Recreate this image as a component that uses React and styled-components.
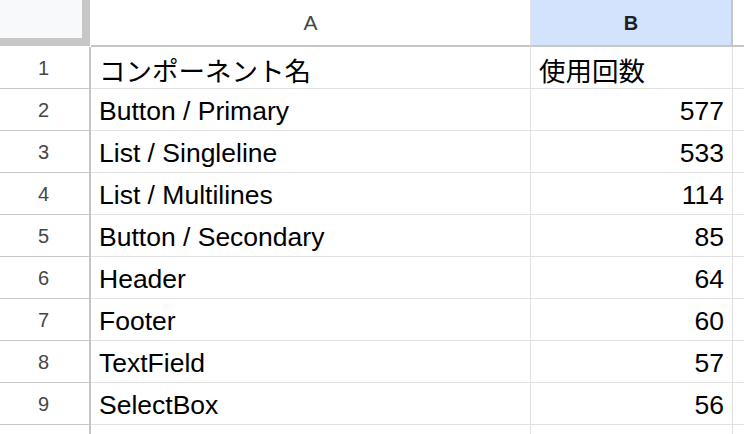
import React from 'react';
import styled, { createGlobalStyle } from 'styled-components'

const rows = [
    { name: 'コンポーネント名', count: '使用回数', head: true },
    { name: 'Button / Primary', count: 577 },
    { name: 'List / Singleline', count: 533 },
    { name: 'List / Multilines', count: 114 },
    { name: 'Button / Secondary', count: 85 },
    { name: 'Header', count: 64 },
    { name: 'Footer', count: 60 },
    { name: 'TextField', count: 57 },
    { name: 'SelectBox', count: 56 },
]

const App = () => {
    return (
        <>
            <Global />
            <Sheet>
                <Corner />
                <ColHeader>A</ColHeader>
                <ColHeader selected>B</ColHeader>
                <ColHeader />
                {rows.map((row, i) => (
                    <React.Fragment key={i}>
                        <RowHeader>{i + 1}</RowHeader>
                        <Cell>{row.name}</Cell>
                        <Cell align={row.head ? 'left' : 'right'}>{row.count}</Cell>
                        <Cell />
                    </React.Fragment>
                ))}
                {/* next row, only its top edge is in view */}
                <RowHeader />
                <Cell />
                <Cell />
                <Cell />
            </Sheet>
        </>
    );
}

export default App

const Global = createGlobalStyle`
    html, body {
        margin: 0;
        padding: 0;
        background: #fff;
        overflow: hidden;
    }
    body {
        font-family: "Liberation Sans", Arial, "Noto Sans CJK JP", sans-serif;
    }
`

const Sheet = styled.div`
    display: grid;
    grid-template-columns: 91px 440px 202px 1fr;
    grid-template-rows: 47px repeat(10, 42px);
    width: 744px;
    height: 434px;
    overflow: hidden;
`

const Corner = styled.div`
    background: #f8f9fa;
    border-right: 8px solid #c7c7c7;
    border-bottom: 8px solid #c7c7c7;
    box-sizing: border-box;
    height: 46px;
    width: 90px;
`

const ColHeader = styled.div`
    display: flex;
    align-items: center;
    justify-content: center;
    box-sizing: border-box;
    padding-top: 1px;
    background: ${p => p.selected ? '#d3e3fd' : '#fff'};
    border-bottom: 2px solid #c4c7c5;
    border-right: ${p => p.selected ? '2px solid #c4c7c5' : '1px solid #e1e1e1'};
    color: ${p => p.selected ? '#1f1f1f' : '#444746'};
    font-size: ${p => p.selected ? '20px' : '21px'};
    font-weight: ${p => p.selected ? 700 : 400};
`

const RowHeader = styled.div`
    display: flex;
    align-items: center;
    justify-content: center;
    box-sizing: border-box;
    padding: 2px 2px 0 0;
    border-right: 2px solid #c4c7c5;
    border-bottom: 1px solid #c4c7c5;
    color: #444746;
    font-size: 20px;
`

const Cell = styled.div`
    display: flex;
    align-items: center;
    justify-content: ${p => p.align === 'right' ? 'flex-end' : 'flex-start'};
    box-sizing: border-box;
    padding: 3px 8px 0;
    border-right: 1px solid #e1e1e1;
    border-bottom: 1px solid #e1e1e1;
    color: #000;
    font-size: 26.5px;
    white-space: nowrap;
    overflow: hidden;
`
